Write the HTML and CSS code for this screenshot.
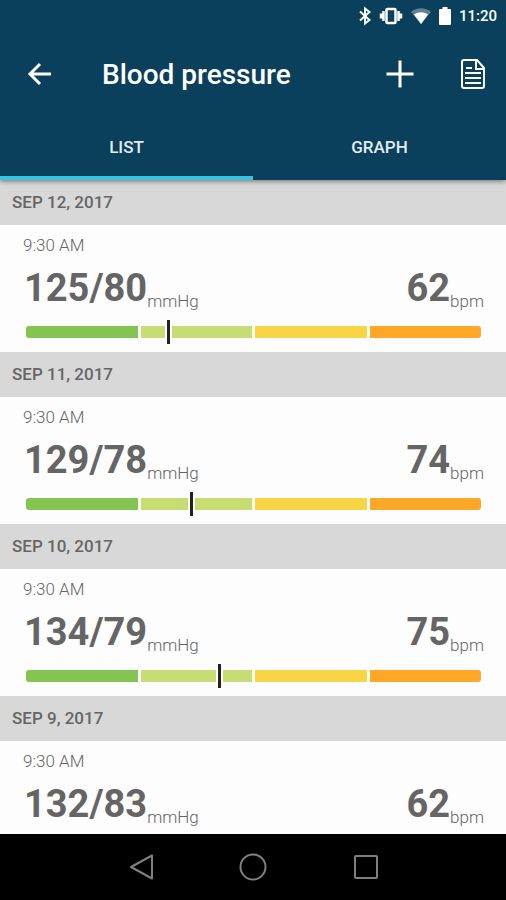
FILE: index.html
```html
<!DOCTYPE html>
<html lang="en">
<head>
  <meta charset="UTF-8">
  <meta name="viewport" content="width=device-width, initial-scale=1.0">
  <title>Blood pressure</title>
  <link rel="stylesheet" href="styles.css">
</head>
<body>
  <header class="app-header">
    <div class="status-bar">
      <svg class="bluetooth" viewBox="0 0 14 20"><path d="M2 5.500L11.500 14 7 17.500V2.500L11.500 6 2 14.500"/></svg>
      <svg class="vibrate" viewBox="0 0 24 20"><rect x="7.500" y="3" width="9" height="14" rx="1"/><path d="M4.500 5v10M19.500 5v10M2 7.500v5M22 7.500v5"/></svg>
      <svg class="wifi" viewBox="0 0 22 20"><path class="wifi-dim" d="M1 6C7 1 15 1 21 6L11 18z"/><path d="M4 8.500C8.500 5.500 13.500 5.500 18 8.500L11 18z"/></svg>
      <svg class="battery" viewBox="0 0 14 20"><path d="M4.500 1h5v2H12a1 1 0 0 1 1 1v14a1 1 0 0 1-1 1H2a1 1 0 0 1-1-1V4a1 1 0 0 1 1-1h2.500z"/></svg>
      <time>11:20</time>
    </div>
    <div class="toolbar">
      <button class="icon-button" title="Back">
        <svg viewBox="0 0 30 30"><path d="M25 15H4M14 5L4 15l10 10"/></svg>
      </button>
      <h1>Blood pressure</h1>
      <button class="icon-button add" title="Add">
        <svg viewBox="0 0 30 30"><path d="M15 1.500v27M1.500 15h27"/></svg>
      </button>
      <button class="icon-button report" title="Report">
        <svg viewBox="0 0 26 32"><path d="M4 2h13l7 8v18a2 2 0 0 1-2 2H4a2 2 0 0 1-2-2V4a2 2 0 0 1 2-2zM16 2v9h8M6 10h6M5 15h16M5 20h16M5 25h16"/></svg>
      </button>
    </div>
    <nav class="tabs">
      <button class="tab active">LIST</button>
      <button class="tab">GRAPH</button>
    </nav>
  </header>

  <main class="readings">
    <section>
      <h2>SEP 12, 2017</h2>
      <article class="reading">
        <time>9:30 AM</time>
        <div class="values">
          <p><strong>125/80</strong><span>mmHg</span></p>
          <p><strong>62</strong><span>bpm</span></p>
        </div>
        <div class="scale">
          <i class="optimal"></i><i class="normal"></i><i class="elevated"></i><i class="high"></i>
          <b class="marker" style="left: 31.3%"></b>
        </div>
      </article>
    </section>
    <section>
      <h2>SEP 11, 2017</h2>
      <article class="reading">
        <time>9:30 AM</time>
        <div class="values">
          <p><strong>129/78</strong><span>mmHg</span></p>
          <p><strong>74</strong><span>bpm</span></p>
        </div>
        <div class="scale">
          <i class="optimal"></i><i class="normal"></i><i class="elevated"></i><i class="high"></i>
          <b class="marker" style="left: 36.3%"></b>
        </div>
      </article>
    </section>
    <section>
      <h2>SEP 10, 2017</h2>
      <article class="reading">
        <time>9:30 AM</time>
        <div class="values">
          <p><strong>134/79</strong><span>mmHg</span></p>
          <p><strong>75</strong><span>bpm</span></p>
        </div>
        <div class="scale">
          <i class="optimal"></i><i class="normal"></i><i class="elevated"></i><i class="high"></i>
          <b class="marker" style="left: 42.5%"></b>
        </div>
      </article>
    </section>
    <section>
      <h2>SEP 9, 2017</h2>
      <article class="reading">
        <time>9:30 AM</time>
        <div class="values">
          <p><strong>132/83</strong><span>mmHg</span></p>
          <p><strong>62</strong><span>bpm</span></p>
        </div>
      </article>
    </section>
  </main>

  <nav class="system-nav">
    <button title="Back"><svg viewBox="0 0 28 28"><path d="M25 2.500v23L4 14z"/></svg></button>
    <button title="Home"><svg viewBox="0 0 28 28"><circle cx="14" cy="14" r="12.500"/></svg></button>
    <button title="Recent apps"><svg viewBox="0 0 28 28"><rect x="3" y="3" width="22" height="22" rx="1"/></svg></button>
  </nav>
</body>
</html>
```
FILE: styles.css
```css
* { box-sizing: border-box; }
body {
  margin: 0;
  height: 100vh;
  display: flex;
  flex-direction: column;
  background: #fdfdfd;
  color: #656565;
  font-family: Roboto, sans-serif;
}
button {
  padding: 0;
  border: none;
  background: none;
  color: inherit;
  font: inherit;
  cursor: pointer;
}
svg {
  display: block;
  fill: none;
  stroke: currentColor;
}
h1, h2, p { margin: 0; }

/* Header */
.app-header {
  position: relative;
  z-index: 1;
  background: #0a405b;
  color: #fff;
  box-shadow: 0 1px 5px rgba(0,0,0,0.5);
}
.status-bar {
  height: 32px;
  padding-right: 9px;
  display: flex;
  align-items: center;
  justify-content: flex-end;
  font-size: 15px;
  font-weight: 500;
}
.status-bar svg { height: 20px; }
.status-bar .bluetooth { width: 14px; margin-right: 7px; stroke-width: 2; }
.status-bar .vibrate { width: 24px; margin-right: 7px; stroke-width: 2.5; }
.status-bar .wifi { width: 22px; margin-right: 6px; fill: #fff; stroke: none; }
.status-bar .wifi-dim { opacity: 0.35; }
.status-bar .battery { width: 14px; margin-right: 7px; fill: #fff; stroke: none; }
.toolbar {
  height: 84px;
  padding: 0 20px 0 26px;
  display: flex;
  align-items: center;
}
.toolbar h1 {
  flex: 1;
  margin-left: 46px;
  font-size: 28px;
  font-weight: 500;
}
.icon-button svg { width: 30px; height: 30px; stroke-width: 3; }
.icon-button.add { margin-right: 45px; }
.icon-button.report svg { width: 26px; height: 32px; stroke-width: 2; }
.tabs { display: flex; }
.tab {
  flex: 1;
  height: 64px;
  padding-bottom: 2px;
  border-top: 4px solid transparent;
  border-bottom: 4px solid transparent;
  font-size: 17px;
  font-weight: 500;
  color: #e4ecf2;
}
.tab.active { border-bottom-color: #35c5df; }

/* Readings */
.readings {
  flex: 1;
  min-height: 0;
  overflow-y: auto;
  scrollbar-width: none;
}
.readings h2 {
  height: 45px;
  padding: 0 12px;
  background: #d8d8d8;
  font-size: 17px;
  font-weight: 500;
  line-height: 45px;
}
.reading {
  height: 127px;
  padding: 10px 22px 0 23px;
}
.reading time {
  display: block;
  font-size: 17px;
  font-weight: 300;
  line-height: 20px;
}
.values {
  display: flex;
  justify-content: space-between;
  margin-top: 9px;
  line-height: 48px;
}
.values p { display: flex; }
.values strong {
  padding-left: 1px;
  font-size: 38px;
  font-weight: 700;
}
.values span {
  padding-top: 13px;
  font-size: 17px;
  font-weight: 300;
}
.scale {
  position: relative;
  display: flex;
  gap: 3px;
  height: 12px;
  margin: 1px 3px 0;
}
.scale i { flex: 1; }
.optimal { background: #84c450; border-radius: 3px 0 0 3px; }
.normal { background: #c7dc73; }
.elevated { background: #f7d545; }
.high { background: #ffa726; border-radius: 0 3px 3px 0; }
.marker {
  position: absolute;
  top: -6px;
  width: 7px;
  height: 24px;
  margin-left: -3px;
  border: solid #fdfdfd;
  border-width: 0 2px;
  background: #222;
  background-clip: padding-box;
}

/* Android navigation */
.system-nav {
  height: 66px;
  padding: 0 84px 0 85px;
  display: flex;
  background: #000;
  color: #808080;
}
.system-nav button {
  flex: 1;
  display: flex;
  align-items: center;
  justify-content: center;
}
.system-nav svg { width: 28px; height: 28px; stroke-width: 2; stroke-linejoin: round; }
```
